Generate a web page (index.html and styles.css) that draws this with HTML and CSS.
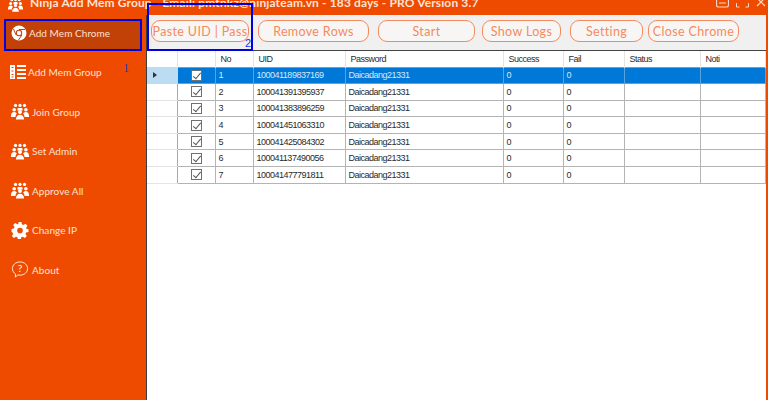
FILE: index.html
```html
<!DOCTYPE html>
<html lang="en">
<head>
    <meta charset="UTF-8">
    <title>Ninja Add Mem Group</title>
    <link rel="stylesheet" href="styles.css">
</head>
<body>
    <svg class="defs" width="0" height="0">
        <symbol id="people" viewBox="0 0 20 18">
            <g fill="#fff">
                <circle cx="5" cy="2.2" r="1.8"/><circle cx="15" cy="2.2" r="1.8"/><circle cx="10" cy="2.2" r="1.8"/>
                <path d="M7.5 5h5l.5 3h-6z"/>
                <circle cx="3.5" cy="7" r="2"/><circle cx="16.5" cy="7" r="2"/><circle cx="10" cy="9.5" r="2.2"/>
                <path d="M0 14c0-3 1.500-4.500 3.500-4.500 1.500 0 2.500.8 3 2-1 .8-1.500 2-1.500 3.500H0z"/>
                <path d="M20 14c0-3-1.500-4.500-3.500-4.500-1.500 0-2.500.8-3 2 1 .8 1.500 2 1.500 3.500H20z"/>
                <path d="M5.500 18c0-3.500 2-5.500 4.500-5.500s4.500 2 4.500 5.500z"/>
            </g>
        </symbol>
    </svg>

    <header class="titlebar">
        <svg class="title-icon"><use href="#people"/></svg>
        <span class="title-text">Ninja Add Mem Group - Email: pmtnkz@ninjateam.vn - 183 days - PRO Version 3.7</span>
        <div class="win-btns">
            <svg width="13" height="9" viewBox="0 0 13 9"><path d="M.5 0v6q0 2 2 2h8q2 0 2-2V0M3 4h7" fill="none" stroke="#fbd5c2" stroke-width="1.200"/></svg>
            <svg width="13" height="9" viewBox="0 0 13 9"><path d="M.5 4v4h3M9.500 8h3V4M.5 0v1M12.500 0v1" fill="none" stroke="#fbd5c2"/></svg>
            <svg width="11" height="9" viewBox="0 0 11 9"><path d="M1 7l4-4 4-4M1-1l4 4 4 4" fill="none" stroke="#fbd5c2" stroke-width="1.200"/></svg>
        </div>
    </header>

    <div class="app">
        <nav class="sidebar">
            <a class="nav-item active">
                <svg class="nav-icon" viewBox="0 0 16 16"><circle cx="8" cy="8" r="7.500" fill="#fff"/><circle cx="8" cy="8" r="3.200" fill="#c24107"/><circle cx="8" cy="8" r="2.200" fill="#fff"/><path d="M8 4.500h6M5 9.800L2.500 4M10.800 10L7.500 15" stroke="#c24107" stroke-width="1"/></svg>
                <span>Add Mem Chrome</span>
            </a>
            <a class="nav-item">
                <svg class="nav-icon" viewBox="0 0 16 16"><g fill="#fff"><path d="M0 1h5v14H0z"/><path d="M7 1h9v2H7zM7 5h9v2H7zM7 9h9v2H7zM7 13h9v2H7z"/></g><path d="M1.500 3.500h2M1.500 7h2M1.500 10.500h2M1.500 13h2" stroke="#ef4b00"/></svg>
                <span>Add Mem Group</span>
            </a>
            <a class="nav-item wide"><svg class="nav-icon people"><use href="#people"/></svg><span>Join Group</span></a>
            <a class="nav-item wide"><svg class="nav-icon people"><use href="#people"/></svg><span>Set Admin</span></a>
            <a class="nav-item wide"><svg class="nav-icon people"><use href="#people"/></svg><span>Approve All</span></a>
            <a class="nav-item wide">
                <svg class="nav-icon people" viewBox="0 0 18 18"><path fill="#fff" fill-rule="evenodd" d="M7.500 0h3l.5 2.500 1.600.7L14.800 1.800l2.100 2.100-1.400 2.200.7 1.600L18 7.500v3l-2.500.5-.7 1.600 1.400 2.200-2.100 2.100-2.200-1.400-1.600.7-.5 2.500h-3l-.5-2.500-1.600-.7-2.200 1.400-2.100-2.100 1.400-2.200-.7-1.600L0 10.500v-3l2.500-.5.7-1.600-1.400-2.200 2.100-2.100 2.200 1.400L7.200 2.500zM9 6a3 3 0 100 6 3 3 0 000-6z"/></svg>
                <span>Change IP</span>
            </a>
            <a class="nav-item wide">
                <svg class="nav-icon people" viewBox="0 0 18 18"><path d="M9 1c4.500 0 8 3 8 7s-3.500 7-8 7c-.8 0-1.500-.1-2.200-.3L4 17l.3-3.200C2.200 12.500 1 10.400 1 8c0-4 3.500-7 8-7z" fill="none" stroke="#fff" stroke-width=".9"/><text x="9" y="12" class="help-mark">?</text></svg>
                <span>About</span>
            </a>
        </nav>

        <main class="content">
            <div class="toolbar">
                <button class="tool-btn paste">Paste UID | Pass</button>
                <button class="tool-btn remove">Remove Rows</button>
                <button class="tool-btn start">Start</button>
                <button class="tool-btn logs">Show Logs</button>
                <button class="tool-btn setting">Setting</button>
                <button class="tool-btn close">Close Chrome</button>
            </div>
            <table class="grid">
                <colgroup>
                    <col class="c-head"><col class="c-check"><col class="c-no"><col class="c-uid"><col class="c-pass">
                    <col class="c-success"><col class="c-fail"><col class="c-status"><col class="c-noti">
                </colgroup>
                <thead>
                    <tr><th></th><th></th><th>No</th><th>UID</th><th>Password</th><th>Success</th><th>Fail</th><th>Status</th><th>Noti</th></tr>
                </thead>
                <tbody id="rows">
                    <tr class="selected"><td class="row-head"><span class="arrow"></span></td><td class="check"><span class="box"></span></td><td>1</td><td>100041189837169</td><td>Daicadang21331</td><td>0</td><td>0</td><td></td><td></td></tr>
                    <tr><td class="row-head"></td><td class="check"><span class="box"></span></td><td>2</td><td>100041391395937</td><td>Daicadang21331</td><td>0</td><td>0</td><td></td><td></td></tr>
                    <tr><td class="row-head"></td><td class="check"><span class="box"></span></td><td>3</td><td>100041383896259</td><td>Daicadang21331</td><td>0</td><td>0</td><td></td><td></td></tr>
                    <tr><td class="row-head"></td><td class="check"><span class="box"></span></td><td>4</td><td>100041451063310</td><td>Daicadang21331</td><td>0</td><td>0</td><td></td><td></td></tr>
                    <tr><td class="row-head"></td><td class="check"><span class="box"></span></td><td>5</td><td>100041425084302</td><td>Daicadang21331</td><td>0</td><td>0</td><td></td><td></td></tr>
                    <tr><td class="row-head"></td><td class="check"><span class="box"></span></td><td>6</td><td>100041137490056</td><td>Daicadang21331</td><td>0</td><td>0</td><td></td><td></td></tr>
                    <tr><td class="row-head"></td><td class="check"><span class="box"></span></td><td>7</td><td>100041477791811</td><td>Daicadang21331</td><td>0</td><td>0</td><td></td><td></td></tr>
                </tbody>
            </table>
        </main>
    </div>

    <!-- blue marks drawn on top of the screenshot -->
    <div class="mark mark-one"></div>
    <div class="mark mark-two"></div>
    <span class="mark-num num-one">1</span>
    <span class="mark-num num-two">2</span>
</body>
</html>
```

FILE: styles.css
```css
* {
    margin: 0;
    padding: 0;
    box-sizing: border-box;
}

body {
    width: 768px;
    height: 400px;
    overflow: hidden;
    position: relative;
    font-family: 'Liberation Sans', Arial, sans-serif;
    background: #ef4b00;
}

.defs {
    position: absolute;
}

.titlebar {
    height: 15px;
    display: flex;
    align-items: center;
    padding-left: 8px;
    overflow: hidden;
    color: #fbe3d6;
}

.title-icon {
    width: 15px;
    height: 14px;
    margin-top: -6px;
    flex: none;
}

.title-text {
    margin: -10px 0 0 7px;
    font-family: Lato, sans-serif;
    font-size: 12px;
    font-weight: 700;
    letter-spacing: 0.13px;
    white-space: nowrap;
}

.win-btns {
    margin-left: auto;
    margin-top: -8px;
    padding-right: 1px;
    display: flex;
    gap: 7px;
}

.app {
    display: flex;
    height: 385px;
}

.sidebar {
    width: 146px;
    flex: none;
    display: flex;
    flex-direction: column;
    padding: 4px 5px 0 5px;
}

.nav-item {
    height: 39.500px;
    display: flex;
    align-items: center;
    gap: 2px;
    padding-left: 5px;
    color: #fde2d4;
    font-family: Lato, sans-serif;
    font-size: 10px;
    letter-spacing: 0.05px;
}

.nav-item.active {
    height: 32px;
    margin-bottom: 1.500px;
    padding: 0 0 4px 6px;
    background: #c24107;
}

.nav-icon {
    width: 16px;
    height: 16px;
    flex: none;
}

.nav-icon.people {
    width: 18px;
    height: 17px;
    margin: 0 1px 0 1px;
}

.help-mark {
    fill: #fff;
    font-size: 11px;
    text-anchor: middle;
}

.content {
    flex: 1;
    margin-right: 3px;
    background: #fff;
    border-left: 1px solid #3c3c3c;
}

.toolbar {
    height: 36px;
    display: flex;
    align-items: center;
    padding: 0 0 3px 4px;
    background: #f0f0f0;
    border-bottom: 1px solid #444;
}

.tool-btn {
    height: 22px;
    background: #f8f6f5;
    border: 1px solid #f58a5c;
    border-radius: 9px;
    color: #f58a5c;
    font-family: Lato, sans-serif;
    font-size: 12.500px;
    letter-spacing: 0.35px;
    white-space: nowrap;
}

.paste { width: 98px; margin-right: 9px; }
.remove { width: 111px; margin-right: 9px; }
.start { width: 97px; margin-right: 7px; }
.logs { width: 79px; margin-right: 9px; }
.setting { width: 73px; margin-right: 5px; }
.close { width: 91px; }

.grid {
    width: 618px;
    table-layout: fixed;
    border-collapse: collapse;
    font-size: 9px;
    letter-spacing: -0.5px;
    color: #2a2a2a;
}

.c-head { width: 30px; }
.c-check { width: 38px; }
.c-no { width: 38px; }
.c-uid { width: 92px; }
.c-pass { width: 158px; }
.c-success { width: 60px; }
.c-fail { width: 61px; }
.c-status { width: 76px; }
.c-noti { width: 65px; }

.grid th {
    height: 16px;
    padding-left: 5px;
    font-weight: 400;
    text-align: left;
    border-right: 1px solid #e4e4e4;
}

.grid td {
    height: 16.600px;
    padding-left: 3px;
    border: 1px solid #b4b4b4;
    white-space: nowrap;
}

.grid .row-head {
    border: 0;
    border-bottom: 1px solid #e4e4e4;
    border-right: 1px solid #a8a8a8;
}

.grid .check {
    padding: 0;
    text-align: center;
}

.box {
    display: inline-block;
    width: 11px;
    height: 11px;
    margin-top: 2px;
    border: 1px solid #707070;
    background: #fff;
    position: relative;
}

.box::after {
    content: '';
    position: absolute;
    left: 3px;
    top: 0;
    width: 3px;
    height: 7px;
    border: solid #555;
    border-width: 0 1px 1px 0;
    transform: rotate(40deg);
}

.selected td {
    background: #0078d7;
    color: #d6e9f8;
    border-color: #5aa3dd;
}

.selected .row-head {
    background: #bcdcf4;
    border-color: #bcdcf4;
}

.arrow {
    display: block;
    margin-left: 3px;
    width: 0;
    height: 0;
    border-left: 4px solid #333;
    border-top: 3px solid transparent;
    border-bottom: 3px solid transparent;
}

.mark {
    position: absolute;
    border: 2px solid #0000e0;
}

.mark-one {
    left: 4px;
    top: 19px;
    width: 138px;
    height: 32px;
}

.mark-two {
    left: 147px;
    top: 3px;
    width: 106px;
    height: 48px;
}

.mark-num {
    position: absolute;
    color: #2a2aff;
    font-family: 'Liberation Serif', serif;
    font-size: 12px;
}

.num-one { left: 123px; top: 61px; }
.num-two { left: 245px; top: 37px; font-size: 11px; font-family: 'Liberation Sans', sans-serif; }
```
